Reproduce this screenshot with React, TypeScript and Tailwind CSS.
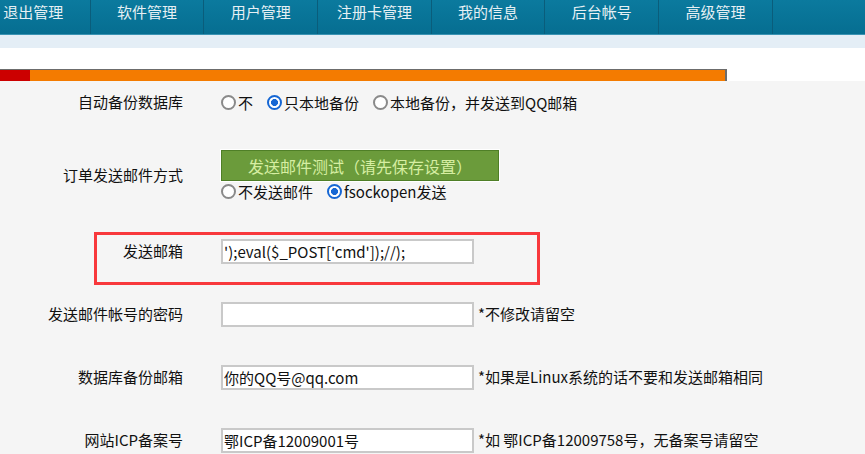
import type { ReactNode } from "react"

const navItems = ["退出管理", "软件管理", "用户管理", "注册卡管理", "我的信息", "后台帐号", "高级管理"]

const font = { fontFamily: '"Noto Sans CJK SC", "Noto Sans", sans-serif' }

const Row = ({ label, className, children }: { label: string; className: string; children: ReactNode }) => (
  <div className={`relative flex items-center ${className}`}>
    <div className="w-[183px] shrink-0 text-right text-[15px] text-[#111]">{label}</div>
    <div className="ml-[38px] flex items-center text-[15px] text-[#111]">{children}</div>
  </div>
)

const Radio = ({ name, label, checked }: { name: string; label: string; checked?: boolean }) => (
  <label className="mr-[14px] flex items-center leading-[19px]">
    <input
      type="radio"
      name={name}
      defaultChecked={checked}
      className="m-0 mr-[2px] h-[15px] w-[15px] appearance-none rounded-full border-2 border-[#8a8a8a] bg-white checked:border-[#1667d4] checked:bg-[radial-gradient(circle,#1667d4_42%,#fff_48%)]"
    />
    {label}
  </label>
)

const TextBox = ({ value }: { value?: string }) => (
  <input
    type="text"
    defaultValue={value}
    className="h-[25px] w-[253px] border-2 border-[#c9c9c9] bg-white px-[1px] text-[15px] text-[#111] outline-none"
    style={font}
  />
)

export default function App() {
  return (
    <div className="h-[454px] w-[865px] overflow-hidden bg-[#f5f5f5]" style={font}>
      {/* top nav */}
      <div className="h-[35px] overflow-hidden border-b border-[#3a93b3] bg-gradient-to-b from-[#0b7a9e] to-[#066e91]">
        <div className="-ml-[23px] flex h-full">
          {navItems.map((item) => (
            <div
              key={item}
              className="h-full w-[113.7px] shrink-0 border-r border-[#0a5d7b] text-center text-[15px] leading-[23px] text-[#e6f0f4]"
            >
              {item}
            </div>
          ))}
        </div>
      </div>
      <div className="h-[13px] bg-[#e4eef6]" />
      <div className="h-[21px] bg-white" />
      <div className="flex h-[12px] bg-white">
        <div className="flex w-[727px] border-t border-r-2 border-[#6c6c6c] bg-[#f47b00]">
          <div className="w-[30px] bg-[#cc0000]" />
        </div>
      </div>

      {/* settings form */}
      <Row label="自动备份数据库" className="h-[43px]">
        <Radio name="backup" label="不" />
        <Radio name="backup" label="只本地备份" checked />
        <Radio name="backup" label="本地备份，并发送到QQ邮箱" />
      </Row>

      <Row label="订单发送邮件方式" className="h-[96px] pt-[7px]">
        <div className="flex flex-col">
          <button className="h-[31px] w-[278px] border border-[#4f7f27] bg-[#6b9b3b] text-[16px] text-[#d6eea2] outline outline-1 outline-white">
            发送邮件测试（请先保存设置）
          </button>
          <div className="flex h-[20px] items-center">
            <Radio name="mail" label="不发送邮件" />
            <Radio name="mail" label="fsockopen发送" checked />
          </div>
        </div>
      </Row>

      <Row label="发送邮箱" className="h-[63px]">
        <TextBox value="');eval($_POST['cmd']);//);" />
        {/* highlight box */}
        <div className="absolute left-[94px] top-[12px] h-[53px] w-[446px] border-[3px] border-[#f8383c]" />
      </Row>

      <Row label="发送邮件帐号的密码" className="h-[63px]">
        <TextBox />
        <span className="ml-[4px]">*不修改请留空</span>
      </Row>

      <Row label="数据库备份邮箱" className="h-[63px]">
        <TextBox value="你的QQ号@qq.com" />
        <span className="ml-[4px]">*如果是Linux系统的话不要和发送邮箱相同</span>
      </Row>

      <Row label="网站ICP备案号" className="h-[63px]">
        <TextBox value="鄂ICP备12009001号" />
        <span className="ml-[4px]">*如 鄂ICP备12009758号，无备案号请留空</span>
      </Row>
    </div>
  )
}
